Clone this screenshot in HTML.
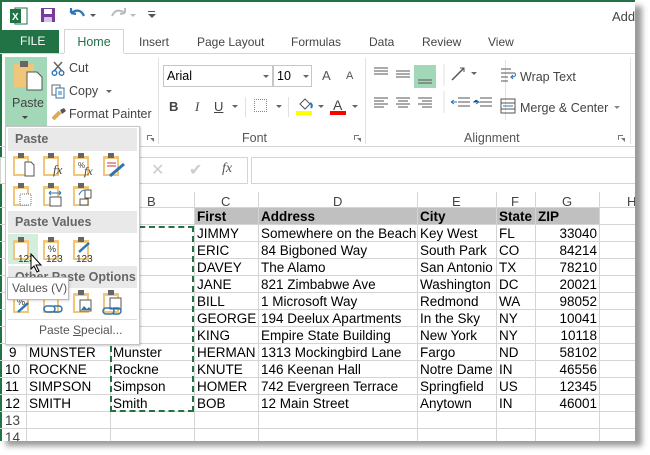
<!DOCTYPE html>
<html><head><meta charset="utf-8"><style>
*{margin:0;padding:0;box-sizing:border-box}
body{width:650px;height:455px;background:#fff;position:relative;overflow:hidden;font-family:"Liberation Sans",Arial,sans-serif}
.a{position:absolute}
.t{font-size:12px;color:#444;white-space:nowrap}
.c{position:absolute;font-size:13.5px;color:#000;white-space:nowrap;line-height:17px;padding-left:2px}
.z{position:absolute;font-size:13.5px;color:#000;white-space:nowrap;line-height:17px;left:535px;width:62px;text-align:right}
.hl{position:absolute;height:1px;background:#d4d4d4}
.vl{position:absolute;width:1px;background:#d4d4d4}
</style></head><body>
<div class="a" style="left:6px;top:6px;width:636px;height:440px;background:#999;filter:blur(3px)"></div>
<div class="a" style="left:0;top:0;width:635px;height:441px;background:#fff;overflow:hidden">
<div class="a" style="left:0;top:0;width:635px;height:2px;background:#217346"></div>
<div class="a" style="left:0;top:0;width:2px;height:441px;background:#217346"></div>
<svg class="a" style="left:10px;top:7px" width="18" height="18"><rect x="5" y="1" width="12" height="16" fill="#fff" stroke="#217346"/><rect x="0" y="2" width="11" height="14" fill="#217346"/><text x="2" y="13" font-size="10" fill="#fff" font-family="Liberation Sans" font-weight="bold">X</text></svg>
<svg class="a" style="left:40px;top:7px" width="16" height="16"><rect x="1" y="1" width="14" height="14" fill="#7a3a9a"/><rect x="4" y="2" width="8" height="5" fill="#fff"/><rect x="4" y="10" width="8" height="5" fill="#d8c5e3"/></svg>
<svg class="a" style="left:68px;top:6px" width="32" height="18"><path d="M3 7 Q12 1 16 10 M3 7 L3 2 M3 7 L8 8" stroke="#2e75b6" stroke-width="2.2" fill="none"/><path d="M22 8 l3 3 l3 -3z" fill="#555"/></svg>
<svg class="a" style="left:108px;top:6px" width="32" height="18"><path d="M17 7 Q8 1 4 10 M17 7 L17 2 M17 7 L12 8" stroke="#bbb" stroke-width="2" fill="none"/><path d="M22 8 l3 3 l3 -3z" fill="#bbb"/></svg>
<div class="a" style="left:148px;top:11px;width:7px;height:1px;background:#555"></div><svg class="a" style="left:148px;top:14px" width="8" height="5"><path d="M0 0 l4 4 l4 -4z" fill="#555"/></svg>
<div class="a t" style="left:612px;top:9px;font-size:13px">Add</div>
<div class="a" style="left:2px;top:30px;width:57px;height:23px;background:#217346;color:#fff;font-size:12px;line-height:23px;padding-left:18px">FILE</div>
<div class="a" style="left:64px;top:29px;width:60px;height:25px;border:1px solid #d4d4d4;border-bottom:none;background:#fff;color:#217346;font-size:12.5px;line-height:24px;text-align:center">Home</div>
<div class="a" style="left:0;top:53px;width:635px;height:1px;background:#d4d4d4"></div>
<div class="a" style="left:64px;top:53px;width:60px;height:1px;background:#fff"></div>
<div class="a t" style="left:139px;top:35px">Insert</div>
<div class="a t" style="left:197px;top:35px">Page Layout</div>
<div class="a t" style="left:291px;top:35px">Formulas</div>
<div class="a t" style="left:369px;top:35px">Data</div>
<div class="a t" style="left:422px;top:35px">Review</div>
<div class="a t" style="left:488px;top:35px">View</div>
<div class="a" style="left:5px;top:57px;width:42px;height:69px;background:#a2d8b8"></div>
<svg class="a" style="left:12px;top:59px" width="32" height="32"><rect x="2" y="5" width="20" height="23" fill="#efc67a"/><rect x="8" y="2" width="8" height="6" fill="#666"/><path d="M15 13 h10 l5 5 v13 h-15z" fill="#fff" stroke="#555"/></svg>
<div class="a t" style="left:12px;top:96px;font-size:12.5px">Paste</div>
<svg class="a" style="left:22px;top:116px" width="6" height="4"><path d="M0 0 l3 3 l3 -3z" fill="#444"/></svg>
<svg class="a" style="left:51px;top:61px" width="15" height="15"><path d="M3 1 L11 10 M11 1 L3 10" stroke="#666" stroke-width="1.5"/><circle cx="3.5" cy="12" r="2.3" fill="none" stroke="#2e75b6" stroke-width="1.4"/><circle cx="10.5" cy="12" r="2.3" fill="none" stroke="#2e75b6" stroke-width="1.4"/></svg>
<div class="a t" style="left:69px;top:61px;font-size:12.5px">Cut</div>
<svg class="a" style="left:51px;top:84px" width="15" height="15"><rect x="1" y="1" width="8" height="10" fill="#fff" stroke="#666"/><rect x="5" y="4" width="8" height="10" fill="#fff" stroke="#2e75b6"/><path d="M7 8h4M7 10h4" stroke="#2e75b6"/></svg>
<div class="a t" style="left:69px;top:84px;font-size:12.5px">Copy</div>
<svg class="a" style="left:106px;top:90px" width="6" height="4"><path d="M0 0 l3 3 l3 -3z" fill="#666"/></svg>
<svg class="a" style="left:51px;top:107px" width="16" height="14"><path d="M2 12 L9 5" stroke="#e0a850" stroke-width="4"/><path d="M9 3 L13 1 L15 4 L11 7z" fill="#555"/></svg>
<div class="a t" style="left:69px;top:107px;font-size:12.5px">Format Painter</div>
<svg class="a" style="left:147px;top:135px" width="7" height="7"><path d="M0 0h5v1h-4v4h-1z M3 3 l4 4 v-4z" fill="#777"/></svg>
<div class="a" style="left:158px;top:58px;width:1px;height:86px;background:#e1e1e1"></div>
<div class="a" style="left:163px;top:65px;width:110px;height:22px;border:1px solid #c6c6c6;font-size:12.5px;line-height:20px;padding-left:3px">Arial</div>
<svg class="a" style="left:263px;top:75px" width="6" height="4"><path d="M0 0 l3 3 l3 -3z" fill="#666"/></svg>
<div class="a" style="left:273px;top:65px;width:39px;height:22px;border:1px solid #c6c6c6;font-size:12.5px;line-height:20px;padding-left:3px">10</div>
<svg class="a" style="left:303px;top:75px" width="6" height="4"><path d="M0 0 l3 3 l3 -3z" fill="#666"/></svg>
<div class="a t" style="left:322px;top:68px;font-size:13px;color:#555">A</div><div class="a t" style="left:346px;top:70px;font-size:11px;color:#555">A</div>
<div class="a" style="left:169px;top:99px;font-size:13px;font-weight:bold;color:#444">B</div>
<div class="a" style="left:195px;top:99px;font-size:13px;font-style:italic;color:#444;font-family:'Liberation Serif'">I</div>
<div class="a" style="left:214px;top:99px;font-size:13px;text-decoration:underline;color:#444">U</div>
<svg class="a" style="left:232px;top:105px" width="6" height="4"><path d="M0 0 l3 3 l3 -3z" fill="#666"/></svg>
<div class="a" style="left:245px;top:97px;width:1px;height:20px;background:#e1e1e1"></div>
<div class="a" style="left:254px;top:99px;width:13px;height:13px;border:1px dotted #888"></div>
<svg class="a" style="left:276px;top:105px" width="6" height="4"><path d="M0 0 l3 3 l3 -3z" fill="#666"/></svg>
<div class="a" style="left:288px;top:97px;width:1px;height:20px;background:#e1e1e1"></div>
<svg class="a" style="left:297px;top:98px" width="16" height="12"><path d="M3 6 L8 1 L13 6 L8 11z" fill="none" stroke="#555"/><path d="M13 5 q3 2 1 5" stroke="#2e75b6" stroke-width="2" fill="none"/></svg>
<div class="a" style="left:296px;top:111px;width:16px;height:4px;background:#ff0"></div>
<svg class="a" style="left:318px;top:105px" width="6" height="4"><path d="M0 0 l3 3 l3 -3z" fill="#666"/></svg>
<div class="a" style="left:333px;top:97px;font-size:14px;color:#444">A</div>
<div class="a" style="left:330px;top:111px;width:16px;height:4px;background:#f00"></div>
<svg class="a" style="left:352px;top:105px" width="6" height="4"><path d="M0 0 l3 3 l3 -3z" fill="#666"/></svg>
<div class="a t" style="left:242px;top:131px;font-size:12.5px;color:#555">Font</div>
<svg class="a" style="left:354px;top:135px" width="7" height="7"><path d="M0 0h5v1h-4v4h-1z M3 3 l4 4 v-4z" fill="#777"/></svg>
<div class="a" style="left:365px;top:58px;width:1px;height:86px;background:#e1e1e1"></div>
<svg class="a" style="left:372px;top:64px" width="120" height="50">
<g stroke="#555" stroke-width="1"><path d="M2 4h14M2 7h14M2 10h14"/><path d="M24 7h14M24 10h14M24 13h14"/></g>
<rect x="42" y="1" width="22" height="23" fill="#a2d8b8"/><path d="M46 16h14M46 19h14" stroke="#555"/>
<g stroke="#555"><path d="M2 34h14M2 37h10M2 40h14M2 43h10"/><path d="M24 34h14M26 37h10M24 40h14M26 43h10"/><path d="M46 34h14M50 37h10M46 40h14M50 43h10"/></g>
<path d="M72 0v22M72 27v22" stroke="#e1e1e1"/>
<path d="M80 16 L92 4" stroke="#555" stroke-width="1.5"/><path d="M88 4h4v4" stroke="#555" fill="none"/><path d="M99 8 l3 3 l3 -3z" fill="#666"/>
<g stroke="#555"><path d="M86 34h12M86 38h12M86 42h12"/><path d="M108 34h12M108 38h12M108 42h12"/></g><path d="M79 38h6M79 38l3 -2M79 38l3 2" stroke="#2e75b6"/><path d="M101 38h6l-3 -2M107 38l-3 2" stroke="#2e75b6"/>
</svg>
<div class="a" style="left:505px;top:60px;width:1px;height:60px;background:#e1e1e1"></div>
<svg class="a" style="left:500px;top:67px" width="18" height="16"><path d="M1 2h10M1 6h14M1 10h7M1 14h7" stroke="#555"/><path d="M15 6 q2 4 -4 4 l2 -2 M11 10 l2 2" stroke="#2e75b6" fill="none"/></svg>
<div class="a t" style="left:520px;top:70px;font-size:12.5px">Wrap Text</div>
<svg class="a" style="left:500px;top:98px" width="16" height="16"><rect x="1" y="1" width="14" height="14" fill="none" stroke="#555"/><path d="M1 5h14M1 11h14" stroke="#555"/><path d="M3 8h10" stroke="#2e75b6"/></svg>
<div class="a t" style="left:520px;top:101px;font-size:12.5px">Merge &amp; Center</div>
<svg class="a" style="left:614px;top:106px" width="6" height="4"><path d="M0 0 l3 3 l3 -3z" fill="#888"/></svg>
<div class="a t" style="left:464px;top:131px;font-size:12.5px;color:#555">Alignment</div>
<svg class="a" style="left:618px;top:135px" width="7" height="7"><path d="M0 0h5v1h-4v4h-1z M3 3 l4 4 v-4z" fill="#777"/></svg>
<div class="a" style="left:630px;top:58px;width:1px;height:86px;background:#e1e1e1"></div>
<div class="a" style="left:0;top:146px;width:635px;height:1px;background:#d4d4d4"></div>
<div class="a" style="left:0;top:157px;width:248px;height:27px;border:1px solid #d4d4d4;background:#fff"></div>
<div class="a" style="left:151px;top:160px;color:#ccc;font-size:16px">✕</div>
<div class="a" style="left:189px;top:160px;color:#ccc;font-size:16px">✔</div>
<div class="a" style="left:222px;top:161px;color:#555;font-size:14px;font-style:italic;font-family:'Liberation Serif'">fx</div>
<div class="a" style="left:251px;top:157px;width:400px;height:27px;border:1px solid #d4d4d4"></div>
<div class="a" style="left:194px;top:208px;width:405px;height:17px;background:#c0c0c0"></div>
</div>
<div class="a" style="left:0;top:0;width:635px;height:441px;pointer-events:none;overflow:hidden">
<div class="hl" style="left:0;top:207px;width:635px"></div>
<div class="hl" style="left:0;top:224px;width:635px"></div><div class="hl" style="left:0;top:241px;width:635px"></div><div class="hl" style="left:0;top:258px;width:635px"></div><div class="hl" style="left:0;top:275px;width:635px"></div><div class="hl" style="left:0;top:292px;width:635px"></div><div class="hl" style="left:0;top:309px;width:635px"></div><div class="hl" style="left:0;top:326px;width:635px"></div><div class="hl" style="left:0;top:343px;width:635px"></div><div class="hl" style="left:0;top:360px;width:635px"></div><div class="hl" style="left:0;top:377px;width:635px"></div><div class="hl" style="left:0;top:394px;width:635px"></div><div class="hl" style="left:0;top:411px;width:635px"></div><div class="hl" style="left:0;top:428px;width:635px"></div>
<div class="vl" style="left:26px;top:192px;height:250px"></div><div class="vl" style="left:110px;top:192px;height:250px"></div><div class="vl" style="left:194px;top:192px;height:250px"></div><div class="vl" style="left:258px;top:192px;height:250px"></div><div class="vl" style="left:417px;top:192px;height:250px"></div><div class="vl" style="left:496px;top:192px;height:250px"></div><div class="vl" style="left:535px;top:192px;height:250px"></div><div class="vl" style="left:599px;top:192px;height:250px"></div>
<div class="a t" style="left:147px;top:194px;font-size:13px">B</div><div class="a t" style="left:221px;top:194px;font-size:13px">C</div><div class="a t" style="left:333px;top:194px;font-size:13px">D</div><div class="a t" style="left:452px;top:194px;font-size:13px">E</div><div class="a t" style="left:511px;top:194px;font-size:13px">F</div><div class="a t" style="left:562px;top:194px;font-size:13px">G</div><div class="a t" style="left:627px;top:194px;font-size:13px">H</div>
<div class="c" style="left:195px;top:208px;font-weight:bold">First</div><div class="c" style="left:259px;top:208px;font-weight:bold">Address</div><div class="c" style="left:418px;top:208px;font-weight:bold">City</div><div class="c" style="left:497px;top:208px;font-weight:bold">State</div><div class="c" style="left:536px;top:208px;font-weight:bold">ZIP</div>
<div class="c" style="left:195px;top:225px">JIMMY</div><div class="c" style="left:259px;top:225px">Somewhere on the Beach</div><div class="c" style="left:418px;top:225px">Key West</div><div class="c" style="left:497px;top:225px">FL</div><div class="z" style="top:225px">33040</div>
<div class="c" style="left:195px;top:242px">ERIC</div><div class="c" style="left:259px;top:242px">84 Bigboned Way</div><div class="c" style="left:418px;top:242px">South Park</div><div class="c" style="left:497px;top:242px">CO</div><div class="z" style="top:242px">84214</div>
<div class="c" style="left:195px;top:259px">DAVEY</div><div class="c" style="left:259px;top:259px">The Alamo</div><div class="c" style="left:418px;top:259px">San Antonio</div><div class="c" style="left:497px;top:259px">TX</div><div class="z" style="top:259px">78210</div>
<div class="c" style="left:195px;top:276px">JANE</div><div class="c" style="left:259px;top:276px">821 Zimbabwe Ave</div><div class="c" style="left:418px;top:276px">Washington</div><div class="c" style="left:497px;top:276px">DC</div><div class="z" style="top:276px">20021</div>
<div class="c" style="left:195px;top:293px">BILL</div><div class="c" style="left:259px;top:293px">1 Microsoft Way</div><div class="c" style="left:418px;top:293px">Redmond</div><div class="c" style="left:497px;top:293px">WA</div><div class="z" style="top:293px">98052</div>
<div class="c" style="left:195px;top:310px">GEORGE</div><div class="c" style="left:259px;top:310px">194 Deelux Apartments</div><div class="c" style="left:418px;top:310px">In the Sky</div><div class="c" style="left:497px;top:310px">NY</div><div class="z" style="top:310px">10041</div>
<div class="c" style="left:195px;top:327px">KING</div><div class="c" style="left:259px;top:327px">Empire State Building</div><div class="c" style="left:418px;top:327px">New York</div><div class="c" style="left:497px;top:327px">NY</div><div class="z" style="top:327px">10118</div>
<div class="c" style="left:7px;top:344px">9</div><div class="c" style="left:27px;top:344px">MUNSTER</div><div class="c" style="left:111px;top:344px">Munster</div><div class="c" style="left:195px;top:344px">HERMAN</div><div class="c" style="left:259px;top:344px">1313 Mockingbird Lane</div><div class="c" style="left:418px;top:344px">Fargo</div><div class="c" style="left:497px;top:344px">ND</div><div class="z" style="top:344px">58102</div>
<div class="c" style="left:3px;top:361px">10</div><div class="c" style="left:27px;top:361px">ROCKNE</div><div class="c" style="left:111px;top:361px">Rockne</div><div class="c" style="left:195px;top:361px">KNUTE</div><div class="c" style="left:259px;top:361px">146 Keenan Hall</div><div class="c" style="left:418px;top:361px">Notre Dame</div><div class="c" style="left:497px;top:361px">IN</div><div class="z" style="top:361px">46556</div>
<div class="c" style="left:3px;top:378px">11</div><div class="c" style="left:27px;top:378px">SIMPSON</div><div class="c" style="left:111px;top:378px">Simpson</div><div class="c" style="left:195px;top:378px">HOMER</div><div class="c" style="left:259px;top:378px">742 Evergreen Terrace</div><div class="c" style="left:418px;top:378px">Springfield</div><div class="c" style="left:497px;top:378px">US</div><div class="z" style="top:378px">12345</div>
<div class="c" style="left:3px;top:395px">12</div><div class="c" style="left:27px;top:395px">SMITH</div><div class="c" style="left:111px;top:395px">Smith</div><div class="c" style="left:195px;top:395px">BOB</div><div class="c" style="left:259px;top:395px">12 Main Street</div><div class="c" style="left:418px;top:395px">Anytown</div><div class="c" style="left:497px;top:395px">IN</div><div class="z" style="top:395px">46001</div>
<div class="c" style="left:3px;top:412px;color:#444">13</div><div class="c" style="left:3px;top:429px;color:#444">14</div>
<div class="c" style="left:111px;top:225px">et</div><div class="c" style="left:111px;top:242px">man</div><div class="c" style="left:111px;top:259px">kett</div><div class="c" style="left:111px;top:293px">s</div><div class="c" style="left:111px;top:310px">rson</div><div class="c" style="left:111px;top:327px">g</div>
<div class="a" style="left:110px;top:226px;width:84px;height:186px;border:2px dashed #217346"></div>
</div>
<div class="a" style="left:5px;top:126px;width:135px;height:219px;background:#fff;border:1px solid #c6c6c6;box-shadow:1px 1px 2px rgba(0,0,0,.2)">
<div class="a" style="left:2px;top:1px;width:129px;height:23px;background:#e9e9e9;font-size:12.5px;font-weight:bold;color:#666;line-height:23px;padding-left:7px">Paste</div>
<div class="a" style="left:2px;top:84px;width:129px;height:22px;background:#e9e9e9;font-size:12.5px;font-weight:bold;color:#666;line-height:22px;padding-left:7px">Paste Values</div>
<div class="a" style="left:2px;top:139px;width:129px;height:22px;background:#e9e9e9;font-size:12.5px;font-weight:bold;color:#666;line-height:22px;padding-left:7px;white-space:nowrap">Other Paste Options</div>
<div class="a" style="left:2px;top:107px;width:30px;height:30px;background:#d4eede"></div>
<div class="a" style="left:2px;top:192px;width:129px;height:1px;background:#e1e1e1"></div>
<div class="a" style="left:33px;top:196px;font-size:12px;color:#555;white-space:nowrap">Paste <u>S</u>pecial...</div>
</div>
<svg class="a" style="left:0;top:0" width="140" height="320">
<defs><g id="cb"><rect x="0" y="3" width="16" height="20" fill="#efc67a"/><rect x="2" y="6" width="12" height="15" fill="#fff"/><rect x="5" y="0" width="6" height="5" fill="#666"/></g></defs>
<use href="#cb" x="13" y="153"/><path d="M25 162h6l3 3v11h-9z" fill="#fff" stroke="#555"/>
<use href="#cb" x="43" y="153"/><text x="53" y="174" font-size="13" font-style="italic" font-family="Liberation Serif" fill="#444">fx</text>
<use href="#cb" x="73" y="153"/><text x="78" y="168" font-size="8" fill="#444" font-family="Liberation Sans">%</text><text x="84" y="175" font-size="12" font-style="italic" font-family="Liberation Serif" fill="#444">fx</text>
<use href="#cb" x="103" y="153"/><path d="M107 163h9M107 166h9" stroke="#c33"/><path d="M110 176 l14 -12" stroke="#2e75b6" stroke-width="3"/>
<use href="#cb" x="13" y="183"/><rect x="20" y="194" width="11" height="11" fill="#fff" stroke="#777" stroke-dasharray="1 1"/>
<use href="#cb" x="43" y="183"/><path d="M49 193h12M49 193l2-2M49 193l2 2M61 193l-2-2M61 193l-2 2" stroke="#2e75b6"/><rect x="50" y="197" width="11" height="9" fill="#fff" stroke="#555"/>
<use href="#cb" x="73" y="183"/><rect x="85" y="190" width="6" height="8" fill="#fff" stroke="#555"/><rect x="80" y="199" width="8" height="6" fill="#fff" stroke="#555"/><path d="M79 195 q2-5 6-5" stroke="#2e75b6" fill="none"/>
<use href="#cb" x="13" y="237"/><text x="18" y="262" font-size="10" fill="#333" font-family="Liberation Sans">123</text>
<use href="#cb" x="43" y="237"/><text x="48" y="252" font-size="9" fill="#333" font-family="Liberation Sans">%</text><text x="46" y="262" font-size="10" fill="#333" font-family="Liberation Sans">123</text>
<use href="#cb" x="73" y="237"/><path d="M79 252 l10 -9" stroke="#2e75b6" stroke-width="2.5"/><text x="76" y="262" font-size="10" fill="#333" font-family="Liberation Sans">123</text>
<use href="#cb" x="13" y="290"/><text x="17" y="305" font-size="9" fill="#333">%</text><path d="M18 312 l10 -9" stroke="#2e75b6" stroke-width="2.5"/>
<use href="#cb" x="43" y="290"/><path d="M47 306h5a3 3 0 0 1 0 6h-5a3 3 0 0 1 0-6M54 306h5a3 3 0 0 1 0 6h-5" stroke="#2e75b6" stroke-width="1.5" fill="none"/>
<use href="#cb" x="73" y="290"/><rect x="80" y="300" width="11" height="11" fill="#fff" stroke="#555"/><path d="M81 310l3-4 3 3 2-2 2 3z" fill="#2e75b6"/>
<use href="#cb" x="103" y="290"/><rect x="110" y="298" width="11" height="11" fill="#fff" stroke="#555"/><path d="M106 308h5a3 3 0 0 1 0 6h-5a3 3 0 0 1 0-6M113 308h5a3 3 0 0 1 0 6h-5" stroke="#2e75b6" stroke-width="1.5" fill="none"/>
<path d="M31 254 v15 l3-3 3 6 2-1 -3-6 h5z" fill="#fff" stroke="#000" stroke-width="1"/>
</svg>
<div class="a" style="left:7px;top:277px;width:62px;height:23px;background:#fff;border:1px solid #bbb;font-size:12px;color:#555;line-height:21px;padding-left:4px;white-space:nowrap;box-shadow:1px 1px 2px rgba(0,0,0,.15)">Values (V)</div>
</body></html>
